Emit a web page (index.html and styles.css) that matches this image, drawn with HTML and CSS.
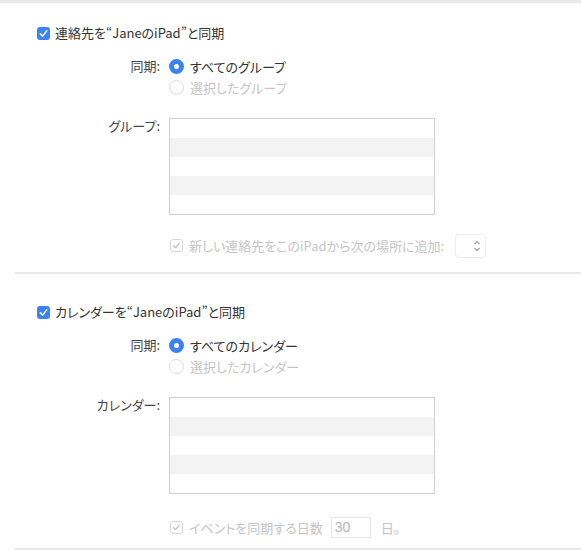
FILE: index.html
```html
<!DOCTYPE html>
<html lang="ja">
<head>
    <meta charset="UTF-8">
    <meta name="viewport" content="width=device-width, initial-scale=1.0">
    <title>同期設定</title>
    <link rel="stylesheet" href="styles.css">
</head>
<body>
    <div class="top-line"></div>

    <div class="section section-first">
        <label class="header">
            <span class="check on"><svg viewBox="0 0 14 14"><path d="M3.5 7.3 L6 9.8 L10.5 4.2"/></svg></span>
            連絡先を“JaneのiPad”と同期
        </label>
        <div class="form">
            <div class="label">同期:</div>
            <div class="radios">
                <div class="radio-row"><span class="radio on"></span>すべてのグループ</div>
                <div class="radio-row disabled"><span class="radio"></span>選択したグループ</div>
            </div>

            <div class="label label-top">グループ:</div>
            <div class="list">
                <div></div><div class="alt"></div><div></div><div class="alt"></div><div></div>
            </div>

            <div></div>
            <div class="option disabled">
                <span class="check off"><svg viewBox="0 0 14 14"><path d="M3.5 7.3 L6 9.8 L10.5 4.2"/></svg></span>
                新しい連絡先をこのiPadから次の場所に追加:
                <span class="popup"><svg viewBox="0 0 8 14"><path d="M1.5 5 L4 2.5 L6.5 5 M1.5 9 L4 11.5 L6.5 9"/></svg></span>
            </div>
        </div>
    </div>

    <div class="section section-last">
        <label class="header">
            <span class="check on"><svg viewBox="0 0 14 14"><path d="M3.5 7.3 L6 9.8 L10.5 4.2"/></svg></span>
            カレンダーを“JaneのiPad”と同期
        </label>
        <div class="form">
            <div class="label">同期:</div>
            <div class="radios">
                <div class="radio-row"><span class="radio on"></span>すべてのカレンダー</div>
                <div class="radio-row disabled"><span class="radio"></span>選択したカレンダー</div>
            </div>

            <div class="label label-top">カレンダー:</div>
            <div class="list">
                <div></div><div class="alt"></div><div></div><div class="alt"></div><div></div>
            </div>

            <div></div>
            <div class="option disabled">
                <span class="check off"><svg viewBox="0 0 14 14"><path d="M3.5 7.3 L6 9.8 L10.5 4.2"/></svg></span>
                イベントを同期する日数
                <span class="days">30</span>
                <span class="unit">日。</span>
            </div>
        </div>
    </div>
</body>
</html>
```

FILE: styles.css
```css
body {
    margin: 0;
    background: #fff;
    font-family: "Noto Sans CJK JP", "Noto Sans", sans-serif;
    font-size: 13px;
    color: #333;
    font-feature-settings: "palt";
}
.top-line {
    height: 3px;
    background: #e9e9e9;
}
.section {
    margin-left: 15px;
    padding: 30px 0 16px;
    border-bottom: 2px solid #e8e8e8;
}
.section-first {
    padding-top: 22px;
}
.header {
    display: flex;
    align-items: center;
    height: 16px;
    line-height: 16px;
    padding-left: 22px;
    gap: 5px;
}
.check {
    width: 13px;
    height: 13px;
    border-radius: 3px;
    box-sizing: border-box;
    display: inline-flex;
    flex-shrink: 0;
}
.check svg {
    width: 13px;
    height: 13px;
    fill: none;
    stroke-width: 1.6;
    stroke-linecap: round;
    stroke-linejoin: round;
}
.check.on {
    background: #3b82f6;
}
.check.on svg {
    stroke: #fff;
}
.check.off {
    border: 1px solid #d6d6d6;
    background: #fff;
}
.check.off svg {
    width: 11px;
    height: 11px;
    stroke: #bdbdbd;
}
.form {
    display: grid;
    grid-template-columns: 145px 1fr;
    column-gap: 9px;
    margin-top: 17px;
}
.label {
    text-align: right;
    color: #444;
    line-height: 16px;
}
.label-top {
    margin-top: 23px;
}
.radios {
    display: flex;
    flex-direction: column;
    gap: 5px;
}
.radio-row {
    display: flex;
    align-items: center;
    gap: 6px;
    height: 16px;
}
.radio {
    width: 15px;
    height: 15px;
    border-radius: 50%;
    box-sizing: border-box;
    border: 1px solid #dcdcdc;
    background: #fff;
    display: inline-block;
}
.radio.on {
    border: 5px solid #3b82f6;
}
.disabled {
    color: #c4c4c4;
}
.list {
    margin-top: 23px;
    width: 264px;
    border: 1px solid #cfcfcf;
    display: flex;
    flex-direction: column;
}
.list div {
    height: 19px;
}
.list .alt {
    background: #f3f3f3;
}
.option {
    display: flex;
    align-items: center;
    gap: 6px;
    margin-top: 20px;
    height: 21px;
    padding-left: 1px;
}
.section-last {
    padding-bottom: 10px;
}
.section-last .option {
    margin-top: 23px;
}
.popup {
    margin-left: 5px;
    width: 31px;
    height: 24px;
    border: 1px solid #ededed;
    border-radius: 4px;
    box-sizing: border-box;
    display: inline-flex;
    justify-content: flex-end;
    align-items: center;
    padding-right: 4px;
}
.popup svg {
    width: 8px;
    height: 14px;
    fill: none;
    stroke: #9a9a9a;
    stroke-width: 1.2;
}
.days {
    margin-left: 2px;
    width: 40px;
    height: 21px;
    border: 1px solid #e6e6e6;
    box-sizing: border-box;
    padding-left: 3px;
    line-height: 19px;
    font-family: "Liberation Sans", sans-serif;
    font-size: 14px;
    color: #b5b5b5;
}
.unit {
    margin-left: 4px;
}
```
